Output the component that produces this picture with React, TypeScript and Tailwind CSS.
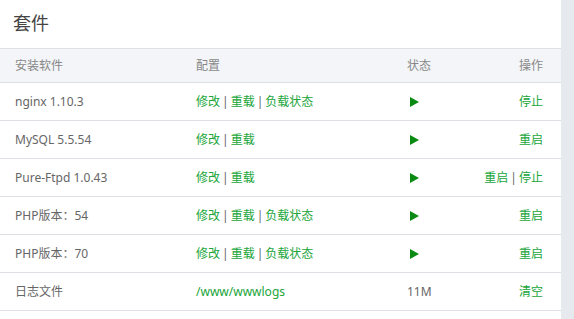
import React from 'react';

type Row = {
  name: string;
  config: string[];
  status: 'run' | string;
  actions: string[];
};

const rows: Row[] = [
  { name: 'nginx 1.10.3', config: ['修改', '重载', '负载状态'], status: 'run', actions: ['停止'] },
  { name: 'MySQL 5.5.54', config: ['修改', '重载'], status: 'run', actions: ['重启'] },
  { name: 'Pure-Ftpd 1.0.43', config: ['修改', '重载'], status: 'run', actions: ['重启', '停止'] },
  { name: 'PHP版本：54', config: ['修改', '重载', '负载状态'], status: 'run', actions: ['重启'] },
  { name: 'PHP版本：70', config: ['修改', '重载', '负载状态'], status: 'run', actions: ['重启'] },
  { name: '日志文件', config: ['/www/wwwlogs'], status: '11M', actions: ['清空'] },
];

const Links = ({ items }: { items: string[] }) => (
  <span className="whitespace-nowrap">
    {items.map((t, i) => (
      <React.Fragment key={t}>
        {i > 0 && <span className="text-[#666] px-[2px]">|</span>}
        <a className="text-[#20a53a] cursor-pointer">{t}</a>
      </React.Fragment>
    ))}
  </span>
);

const PlayIcon = () => (
  <svg width="9" height="10" viewBox="0 0 9 10" className="ml-[3px] mt-[1px]">
    <polygon points="0,0 9,5 0,10" fill="#0a8a12" />
  </svg>
);

const grid = 'grid grid-cols-[181px_211px_1fr_auto] items-center pl-[15px] pr-[18px]';

export default function App() {
  return (
    <div
      className="flex w-[574px] h-[319px] bg-[#e6e9ed] overflow-hidden"
      style={{ fontFamily: '"Noto Sans", "Noto Sans CJK SC", sans-serif' }}
    >
      <div className="w-[561px] bg-white flex flex-col">
        <div className="h-[48px] flex items-center pl-[13px] pb-[1px] text-[18px] text-[#444]">套件</div>
        <div className={`${grid} h-[35px] bg-[#f3f5f8] border-y border-[#dde1e5] text-[12px] text-[#888]`}>
          <div>安装软件</div>
          <div>配置</div>
          <div>状态</div>
          <div className="text-right">操作</div>
        </div>
        {rows.map((r) => (
          <div key={r.name} className={`${grid} h-[38px] border-b border-[#dde1e5] text-[12px] text-[#666]`}>
            <div>{r.name}</div>
            <div>
              <Links items={r.config} />
            </div>
            <div className="flex items-center">
              {r.status === 'run' ? <PlayIcon /> : <span className="text-[#666]">{r.status}</span>}
            </div>
            <div className="text-right">
              <Links items={r.actions} />
            </div>
          </div>
        ))}
      </div>
      <div className="flex-1" />
    </div>
  );
}
